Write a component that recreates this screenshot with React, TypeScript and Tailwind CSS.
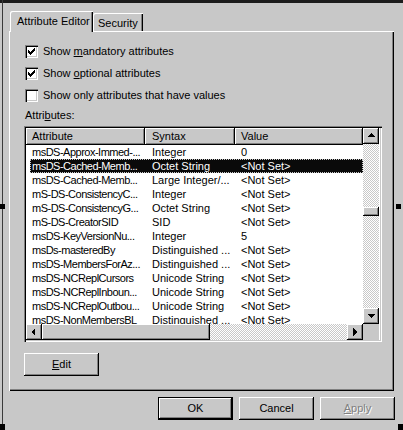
import React from "react";

const raised =
  "bg-[#c8c8c8] shadow-[inset_-1px_-1px_#000000,inset_1px_1px_#ffffff,inset_-2px_-2px_#808080]";

type Row = [string, string, string];
const rows: Row[] = [
  ["msDS-Approx-Immed-...", "Integer", "0"],
  ["msDS-Cached-Memb...", "Octet String", "<Not Set>"],
  ["msDS-Cached-Memb...", "Large Integer/...", "<Not Set>"],
  ["mS-DS-ConsistencyC...", "Integer", "<Not Set>"],
  ["mS-DS-ConsistencyG...", "Octet String", "<Not Set>"],
  ["mS-DS-CreatorSID", "SID", "<Not Set>"],
  ["msDS-KeyVersionNu...", "Integer", "5"],
  ["msDs-masteredBy", "Distinguished ...", "<Not Set>"],
  ["msDS-MembersForAz...", "Distinguished ...", "<Not Set>"],
  ["msDS-NCReplCursors", "Unicode String", "<Not Set>"],
  ["msDS-NCReplInboun...", "Unicode String", "<Not Set>"],
  ["msDS-NCReplOutbou...", "Unicode String", "<Not Set>"],
  ["msDS-NonMembersBL", "Distinguished ...", "<Not Set>"],
];

function Check({ checked }: { checked: boolean }) {
  const ys = [5, 6, 7, 6, 5, 4, 3];
  return (
    <div className="w-[13px] h-[13px] bg-white shadow-[inset_1px_1px_#808080,inset_2px_2px_#000000,inset_-1px_-1px_#ffffff,inset_-2px_-2px_#c8c8c8] shrink-0">
      {checked && (
        <svg width="13" height="13" viewBox="0 0 13 13" shapeRendering="crispEdges">
          {ys.map((y, i) => (
            <rect key={i} x={3 + i} y={y} width="1" height="3" fill="#000" />
          ))}
        </svg>
      )}
    </div>
  );
}

function Arrow({ dir }: { dir: "up" | "down" | "left" | "right" }) {
  const pts: Record<string, string> = {
    up: "4,9 12,9 8,5",
    down: "4,6 12,6 8,10",
    left: "9,4 9,12 5,8",
    right: "6,4 6,12 10,8",
  };
  return (
    <div className={`w-[16px] h-[16px] ${raised} shrink-0`}>
      <svg width="16" height="16" viewBox="0 0 16 16" shapeRendering="crispEdges">
        <polygon points={pts[dir]} fill="#000" />
      </svg>
    </div>
  );
}

const checker =
  "bg-[repeating-conic-gradient(#c8c8c8_0%_25%,#ffffff_0%_50%)] bg-[length:2px_2px]";

export default function App() {
  return (
    <div
      className="relative w-[403px] h-[430px] bg-[#c8c8c8] overflow-hidden text-black text-[11px] leading-[13px]"
      style={{ fontFamily: '"Liberation Sans", Arial, sans-serif' }}
    >
      <div className="h-[3px] bg-[#1c1c1c]" />

      {/* tabs */}
      <div className="flex items-end pl-[10px] pt-[8px] h-[28px]">
        <div className="relative z-10 w-[83px] h-[21px] -mb-[1px] bg-[#c8c8c8] rounded-tl-[2px] shadow-[inset_1px_1px_#ffffff,inset_-1px_0_#000000,inset_-2px_0_#808080] pl-[7px] pt-[4px] whitespace-nowrap">
          Attribute Editor
        </div>
        <div className="w-[50px] h-[18px] bg-[#c8c8c8] rounded-tl-[2px] shadow-[inset_1px_1px_#ffffff,inset_-1px_0_#000000,inset_-2px_0_#808080] pl-[5px] pt-[4px] whitespace-nowrap">
          Security
        </div>
      </div>

      {/* panel */}
      <div className="ml-[9px] w-[385px] h-[360px] shadow-[inset_1px_1px_#ffffff,inset_-1px_-1px_#000000,inset_-2px_-2px_#808080] pl-[15px] pt-[14px] flex flex-col">
        <div className="flex flex-col gap-[9px] pl-[1px]">
          <div className="flex items-center gap-[5px] h-[13px]">
            <Check checked />
            <span>
              Show <span className="underline">m</span>andatory attributes
            </span>
          </div>
          <div className="flex items-center gap-[5px] h-[13px]">
            <Check checked />
            <span>
              Show <span className="underline">o</span>ptional attributes
            </span>
          </div>
          <div className="flex items-center gap-[5px] h-[13px]">
            <Check checked={false} />
            <span>Show only attributes that have values</span>
          </div>
        </div>

        <div className="mt-[7px] h-[13px] pl-[1px]">
          Attri<span className="underline">b</span>utes:
        </div>

        {/* list view */}
        <div className="mt-[4px] w-[358px] h-[216px] bg-white p-[2px] shadow-[inset_1px_1px_#808080,inset_2px_2px_#000000,inset_-1px_-1px_#ffffff,inset_-2px_-2px_#c8c8c8] flex flex-col">
          <div className="flex h-[196px]">
            <div className="w-[337px] flex flex-col overflow-hidden">
              <div className="flex h-[17px] shrink-0">
                <div className={`w-[119px] ${raised} pl-[6px] pt-[2px]`}>Attribute</div>
                <div className={`w-[90px] ${raised} pl-[7px] pt-[2px]`}>Syntax</div>
                <div className={`flex-1 ${raised} pl-[6px] pt-[2px]`}>Value</div>
              </div>
              <div className="flex flex-col pl-[4px] overflow-hidden">
                {rows.map((r, i) => {
                  const sel = i === 1;
                  return (
                    <div
                      key={i}
                      className={`flex h-[14px] shrink-0 items-center whitespace-nowrap ${
                        sel
                          ? "bg-[#0a0a0a] text-white outline outline-1 outline-dotted outline-[#c8c8c8] -outline-offset-1"
                          : ""
                      }`}
                    >
                      <div className="w-[115px] pl-[2px] tracking-[-0.5px]">{r[0]}</div>
                      <div className="w-[90px] pl-[7px] overflow-hidden">{r[1]}</div>
                      <div className="flex-1 pl-[6px] overflow-hidden">{r[2]}</div>
                    </div>
                  );
                })}
              </div>
            </div>
            {/* vertical scrollbar */}
            <div className={`w-[16px] flex flex-col ${checker}`}>
              <Arrow dir="up" />
              <div className="h-[63px]" />
              <div className={`h-[9px] ${raised}`} />
              <div className="flex-1" />
              <Arrow dir="down" />
            </div>
          </div>
          {/* horizontal scrollbar */}
          <div className="flex h-[16px]">
            <div className={`w-[337px] flex ${checker}`}>
              <Arrow dir="left" />
              <div className={`w-[168px] ${raised}`} />
              <div className="flex-1" />
              <Arrow dir="right" />
            </div>
            <div className="w-[16px] bg-[#c8c8c8]" />
          </div>
        </div>

        <div className={`mt-[11px] w-[75px] h-[23px] ${raised} flex items-center justify-center`}>
          <span>
            <span className="underline">E</span>dit
          </span>
        </div>
      </div>

      {/* dialog buttons */}
      <div className="flex justify-end gap-[6px] pr-[8px] mt-[6px]">
        <div className="w-[75px] h-[23px] bg-[#c8c8c8] shadow-[inset_0_0_0_1px_#000000,inset_-2px_-2px_#000000,inset_2px_2px_#ffffff,inset_-3px_-3px_#808080] flex items-center justify-center">
          OK
        </div>
        <div className={`w-[75px] h-[23px] ${raised} flex items-center justify-center`}>Cancel</div>
        <div className={`w-[75px] h-[23px] ${raised} flex items-center justify-center text-[#808080] [text-shadow:1px_1px_0_#ffffff]`}>
          <span>
            <span className="underline">A</span>pply
          </span>
        </div>
      </div>

      {/* design-tool overlays: frame line and resize handles */}
      <div className="absolute left-[2px] top-0 w-[1px] h-[430px] bg-[#3a3a3a]" />
      <div className="absolute left-0 top-[204px] w-[5px] h-[5px] bg-black" />
      <div className="absolute left-[396px] top-[204px] w-[5px] h-[5px] bg-black" />
      <div className="absolute left-0 top-[424px] w-[5px] h-[6px] bg-black" />
      <div className="absolute left-[398px] top-[424px] w-[5px] h-[6px] bg-black" />
    </div>
  );
}
